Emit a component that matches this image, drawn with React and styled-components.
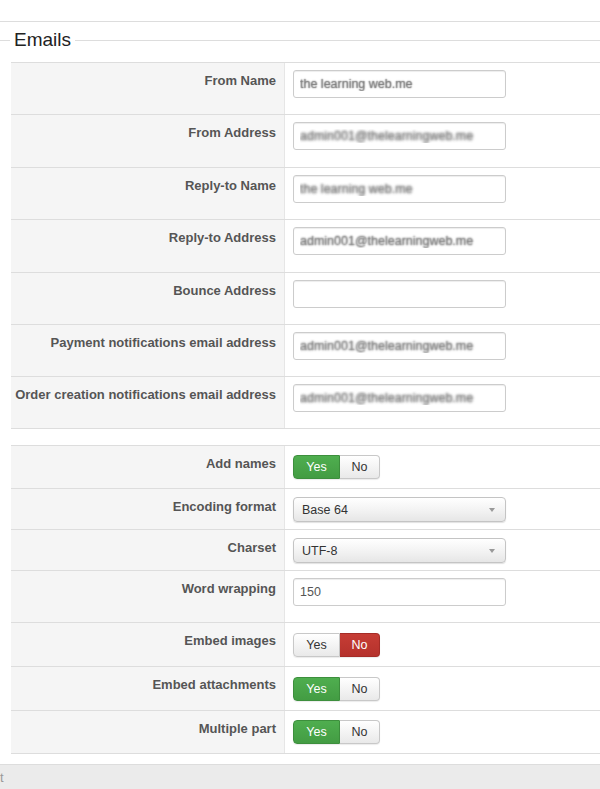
import React from 'react';
import styled, { createGlobalStyle, css } from 'styled-components';

const GlobalStyle = createGlobalStyle`
  html, body {
    margin: 0;
    padding: 0;
    background: #fff;
  }
  body {
    font-family: 'Liberation Sans', Arial, sans-serif;
    font-size: 13px;
    color: #333;
  }
`;

const TopBar = styled.div`
  height: 21px;
  border-bottom: 1px solid #ddd;
`;

const Fieldset = styled.fieldset`
  margin: 7px 0 0;
  padding: 11px 0 0;
  border: 0;
  border-top: 1px solid #ddd;
  min-width: 0;
`;

const Legend = styled.legend`
  margin-left: 10px;
  padding: 0 4px;
  font-size: 19px;
  line-height: 22px;
  color: #222;
`;

const Group = styled.div`
  margin-left: 11px;
  border-bottom: 1px solid #ddd;

  & + & {
    margin-top: 16px;
  }
`;

const Row = styled.div`
  display: grid;
  grid-template-columns: 274px 1fr;
  border-top: 1px solid #ddd;
`;

const Label = styled.div`
  box-sizing: border-box;
  background: #f5f5f5;
  border-right: 1px solid #e6e6e6;
  padding: 9px 8px 0 0;
  text-align: right;
  font-weight: bold;
  line-height: 18px;
  color: #555;
`;

// vertical padding around each kind of control; $loose adds a pixel where a row runs taller
const controlPadding = {
  text: [7, 16],
  select: [8, 7],
  toggle: [9, 9],
};

const Control = styled.div`
  padding: ${({ $kind, $loose }) => {
    const [top, bottom] = controlPadding[$kind];
    return $kind === 'toggle'
      ? `${top + ($loose ? 1 : 0)}px 0 ${bottom}px 8px`
      : `${top}px 0 ${bottom + ($loose ? 1 : 0)}px 8px`;
  }};
`;

const TextInput = styled.input`
  box-sizing: border-box;
  display: block;
  width: 213px;
  height: 28px;
  margin: 0;
  padding: 0 6px;
  border: 1px solid #ccc;
  border-radius: 3px;
  box-shadow: inset 0 1px 1px rgba(0, 0, 0, 0.075);
  font-family: 'Liberation Sans', Arial, sans-serif;
  font-size: 12.5px;
  color: #555;
  background: #fff;
  outline: none;

  ${({ $blur }) =>
    $blur > 0 &&
    css`
      color: transparent;
      text-shadow: 0 0 ${$blur}px #777, 0 0 ${$blur}px #a0a0a0;
    `}
`;

const SelectWrap = styled.div`
  position: relative;
  width: 213px;

  &::after {
    content: '';
    position: absolute;
    right: 11px;
    top: 11px;
    border-left: 3px solid transparent;
    border-right: 3px solid transparent;
    border-top: 4px solid #999;
    pointer-events: none;
  }
`;

const Select = styled.select`
  box-sizing: border-box;
  display: block;
  width: 100%;
  height: 25px;
  margin: 0;
  padding: 0 20px 0 8px;
  appearance: none;
  border: 1px solid #c4c4c4;
  border-radius: 4px;
  background: linear-gradient(#ffffff, #f1f1f1 60%, #e6e6e6);
  box-shadow: 0 1px 1px rgba(0, 0, 0, 0.12);
  font-family: 'Liberation Sans', Arial, sans-serif;
  font-size: 12.5px;
  color: #333;
  outline: none;
`;

const Toggle = styled.div`
  display: flex;
`;

const toneStyles = {
  yes: css`
    background: linear-gradient(#4fae4f, #439c43);
    border-color: #3d8f3d;
    color: #fff;
  `,
  no: css`
    background: linear-gradient(#c63d35, #b5322c);
    border-color: #a52c27;
    color: #fff;
  `,
  off: css`
    background: linear-gradient(#ffffff, #e9e9e9);
    border-color: #c8c8c8;
    color: #333;
  `,
};

const ToggleButton = styled.button`
  box-sizing: border-box;
  height: 24px;
  width: ${({ $width }) => $width}px;
  margin: 0;
  padding: 0;
  border: 1px solid;
  font-family: 'Liberation Sans', Arial, sans-serif;
  font-size: 12.5px;
  box-shadow: 0 1px 1px rgba(0, 0, 0, 0.08);
  cursor: pointer;
  ${({ $tone }) => toneStyles[$tone]}

  &:first-child {
    border-radius: 4px 0 0 4px;
  }
  &:last-child {
    border-radius: 0 4px 4px 0;
    border-left: 0;
  }
`;

const Footer = styled.div`
  margin-top: 10px;
  height: 25px;
  border-top: 1px solid #ddd;
  background: #ebebeb;
  color: #999;
  font-size: 13px;
  line-height: 25px;
  overflow: hidden;
  white-space: nowrap;
`;

const addressFields = [
  { label: 'From Name', value: 'the learning web.me', blur: 1.3 },
  { label: 'From Address', value: 'admin001@thelearningweb.me', blur: 3, loose: true },
  { label: 'Reply-to Name', value: 'the learning web.me', blur: 2.8 },
  { label: 'Reply-to Address', value: 'admin001@thelearningweb.me', blur: 2, loose: true },
  { label: 'Bounce Address', value: '', blur: 0 },
  { label: 'Payment notifications email address', value: 'admin001@thelearningweb.me', blur: 2.2 },
  { label: 'Order creation notifications email address', value: 'admin001@thelearningweb.me', blur: 2.8 },
];

const optionFields = [
  { label: 'Add names', type: 'toggle', value: true },
  { label: 'Encoding format', type: 'select', value: 'Base 64', options: ['Base 64', 'Binary', 'Quoted-printable', '7bit', '8bit'] },
  { label: 'Charset', type: 'select', value: 'UTF-8', options: ['UTF-8', 'ISO-8859-1', 'Windows-1252'] },
  { label: 'Word wrapping', type: 'text', value: '150' },
  { label: 'Embed images', type: 'toggle', value: false, loose: true },
  { label: 'Embed attachments', type: 'toggle', value: true, loose: true },
  { label: 'Multiple part', type: 'toggle', value: true },
];

const YesNo = ({ value }) => (
  <Toggle>
    <ToggleButton type="button" $width={47} $tone={value ? 'yes' : 'off'}>
      Yes
    </ToggleButton>
    <ToggleButton type="button" $width={40} $tone={value ? 'off' : 'no'}>
      No
    </ToggleButton>
  </Toggle>
);

const renderControl = (field) => {
  if (field.type === 'toggle') return <YesNo value={field.value} />;
  if (field.type === 'select') {
    return (
      <SelectWrap>
        <Select defaultValue={field.value}>
          {field.options.map((opt) => (
            <option key={opt}>{opt}</option>
          ))}
        </Select>
      </SelectWrap>
    );
  }
  return <TextInput type="text" defaultValue={field.value} $blur={field.blur || 0} />;
};

const App = () => {
  return (
    <>
      <GlobalStyle />
      <TopBar />
      <Fieldset>
        <Legend>Emails</Legend>
        <Group>
          {addressFields.map((field) => (
            <Row key={field.label}>
              <Label>{field.label}</Label>
              <Control $kind="text" $loose={field.loose}>
                <TextInput type="text" defaultValue={field.value} $blur={field.blur} />
              </Control>
            </Row>
          ))}
        </Group>
        <Group>
          {optionFields.map((field) => (
            <Row key={field.label}>
              <Label>{field.label}</Label>
              <Control $kind={field.type} $loose={field.loose}>
                {renderControl(field)}
              </Control>
            </Row>
          ))}
        </Group>
      </Fieldset>
      <Footer>t</Footer>
    </>
  );
};

export default App;
